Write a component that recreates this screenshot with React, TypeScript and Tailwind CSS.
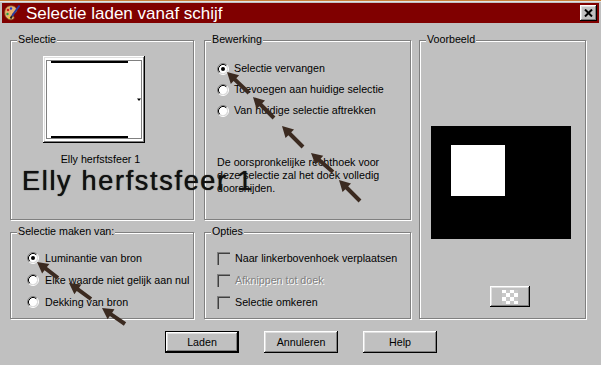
import React from 'react';
import clsx from 'clsx';

// Win95 style bevels
const raised =
  'shadow-[inset_-1px_-1px_0_#000,inset_1px_1px_0_#fff,inset_-2px_-2px_0_#808080,inset_2px_2px_0_#dfdfdf]';

const Radio = ({ checked }: { checked?: boolean }) => (
  <svg width="12" height="12" viewBox="0 0 12 12" className="shrink-0">
    <circle cx="6" cy="6" r="4.2" fill="#fff" />
    <path d="M2.11 9.89A5.5 5.5 0 0 1 9.89 2.11" stroke="#808080" fill="none" />
    <path d="M9.89 2.11A5.5 5.5 0 0 1 2.11 9.89" stroke="#fff" fill="none" />
    <path d="M2.82 9.18A4.5 4.5 0 0 1 9.18 2.82" stroke="#000" fill="none" />
    <path d="M9.18 2.82A4.5 4.5 0 0 1 2.82 9.18" stroke="#dfdfdf" fill="none" />
    {checked && <circle cx="6" cy="6" r="2" fill="#000" />}
  </svg>
);

const Checkbox = () => (
  <div className="h-[13px] w-[13px] shrink-0 border-t border-l border-[#808080] border-r-white border-b-white">
    <div className="h-full w-full border-t border-l border-[#404040] border-r-[#dfdfdf] border-b-[#dfdfdf] bg-[#c0c0c0]" />
  </div>
);

interface GroupBoxProps {
  title: string;
  className?: string;
  children?: React.ReactNode;
}

const GroupBox = ({ title, className, children }: GroupBoxProps) => (
  <div
    className={clsx(
      'relative border border-[#808080] shadow-[1px_1px_0_#fff,inset_1px_1px_0_#fff]',
      className
    )}
  >
    <span className="absolute left-[6px] top-[-8px] whitespace-nowrap bg-[#c0c0c0] px-[1px] leading-[13px]">
      {title}
    </span>
    {children}
  </div>
);

const Button = ({ label, isDefault }: { label: string; isDefault?: boolean }) => (
  <div className={clsx('h-[22px] w-[74px]', isDefault && 'border border-black')}>
    <div className={clsx('flex h-full w-full items-center justify-center', raised)}>
      {label}
    </div>
  </div>
);

// pijlen: punt (tx,ty) en staart (sx,sy)
const arrows: [number, number, number, number][] = [
  [227, 72, 249, 93],
  [253, 97, 274, 118],
  [282, 126, 303, 147],
  [311, 153, 333, 172],
  [339, 180, 360, 201],
  [37, 262, 58, 278],
  [69, 283, 91, 299],
  [102, 308, 125, 324],
];

function arrowPoints(tx: number, ty: number, sx: number, sy: number) {
  const len = Math.hypot(tx - sx, ty - sy);
  const dx = (tx - sx) / len;
  const dy = (ty - sy) / len;
  const nx = -dy;
  const ny = dx;
  const h = 11;
  const w = 6;
  const s = 2;
  const bx = tx - dx * h;
  const by = ty - dy * h;
  const pts = [
    [tx, ty],
    [bx + nx * w, by + ny * w],
    [bx + nx * s, by + ny * s],
    [sx + nx * s, sy + ny * s],
    [sx - nx * s, sy - ny * s],
    [bx - nx * s, by - ny * s],
    [bx - nx * w, by - ny * w],
  ];
  return pts.map((p) => p.join(',')).join(' ');
}

const PaletteIcon = () => (
  <svg width="18" height="18" viewBox="0 0 18 18">
    <path d="M3 4C5 1 11 1 13 4C15 7 13 9 11 9C9 9 10 12 11 13C12 15 8 17 5 15C1 13 1 7 3 4Z" fill="#e8b070" stroke="#7a4a20" strokeWidth="0.8" />
    <circle cx="5" cy="6" r="1.3" fill="#d02020" />
    <circle cx="8" cy="4.5" r="1.2" fill="#2040d0" />
    <circle cx="4.5" cy="10" r="1.2" fill="#20a040" />
    <circle cx="6.5" cy="13.5" r="1.1" fill="#f0e020" />
    <path d="M16.5 1.5L9 12" stroke="#2a3aa0" strokeWidth="2" />
    <path d="M9 12L7.5 14.5" stroke="#222" strokeWidth="2" />
  </svg>
);

const Checker = () => (
  <svg width="16" height="14" viewBox="0 0 16 14">
    {[0, 1, 2, 3].map((r) =>
      [0, 1, 2, 3].map((c) => (
        <rect
          key={`${r}-${c}`}
          x={c * 4}
          y={r * 4 - 1}
          width="4"
          height="4"
          fill={(r + c) % 2 === 0 ? '#ffffff' : '#c8c8c8'}
        />
      ))
    )}
  </svg>
);

export default function App() {
  return (
    <div className="relative h-[365px] w-[601px] overflow-hidden whitespace-nowrap bg-[#c0c0c0] font-['Liberation_Sans',Arial,sans-serif] text-[10.7px] leading-[13px] text-black">
      {/* bovenrand */}
      <div className="h-[1px] bg-[#c8803c]" />
      <div className="h-[1px] bg-[#e4e4e4]" />
      <div className="h-[1px] bg-[#c0c0c0]" />

      {/* titelbalk */}
      <div className="mx-[2px] flex h-[20px] items-center bg-[#800000] pl-[1px] pr-[2px]">
        <PaletteIcon />
        <span className="ml-[5px] pt-[1px] text-[17px] leading-[20px] text-white">
          Selectie laden vanaf schijf
        </span>
        <div className={clsx('ml-auto flex h-[16px] w-[17px] items-center justify-center bg-[#c0c0c0]', raised)}>
          <svg width="9" height="8" viewBox="0 0 9 8">
            <path d="M1 0.5L8 7.5M8 0.5L1 7.5" stroke="#000" strokeWidth="2" />
          </svg>
        </div>
      </div>

      {/* panelen */}
      <div className="flex pl-[10px] pt-[17px]">
        <div className="flex w-[184px] flex-col gap-[12px]">
          <GroupBox title="Selectie" className="h-[180px]">
            <div className={clsx('ml-[32px] mt-[15px] h-[87px] w-[102px] p-[2px]', raised)}>
              <svg width="98" height="83" viewBox="0 0 98 83" className="block">
                <rect width="98" height="83" fill="#fff" />
                <rect x="1.5" y="2.5" width="95" height="78" fill="none" stroke="#000" strokeWidth="1" strokeDasharray="1 1" />
                <rect x="6" y="3" width="77" height="2" fill="#000" />
                <rect x="6" y="78" width="77" height="2" fill="#000" />
                <path d="M92 40.5h4l-2 2.5z" fill="#000" />
              </svg>
            </div>
            <div className="mt-[10px] pr-[3px] text-center">Elly herfstsfeer 1</div>
          </GroupBox>

          <GroupBox title="Selectie maken van:" className="h-[87px]">
            <div className="flex flex-col pl-[16px] pt-[14px]">
              <div className="flex h-[22px] items-center gap-[6px]">
                <Radio checked />
                <span>Luminantie van bron</span>
              </div>
              <div className="flex h-[22px] items-center gap-[6px]">
                <Radio />
                <span>Elke waarde niet gelijk aan nul</span>
              </div>
              <div className="flex h-[22px] items-center gap-[6px]">
                <Radio />
                <span>Dekking van bron</span>
              </div>
            </div>
          </GroupBox>
        </div>

        <div className="ml-[10px] flex w-[207px] flex-col gap-[12px]">
          <GroupBox title="Bewerking" className="h-[180px]">
            <div className="flex flex-col pl-[12px] pt-[17px]">
              <div className="flex h-[21px] items-center gap-[5px]">
                <Radio checked />
                <span>Selectie vervangen</span>
              </div>
              <div className="flex h-[21px] items-center gap-[5px]">
                <Radio />
                <span>Toevoegen aan huidige selectie</span>
              </div>
              <div className="flex h-[21px] items-center gap-[5px]">
                <Radio />
                <span>Van huidige selectie aftrekken</span>
              </div>
              <p className="mt-[35px]">
                De oorspronkelijke rechthoek voor
                <br />
                deze selectie zal het doek volledig
                <br />
                doorsnijden.
              </p>
            </div>
          </GroupBox>

          <GroupBox title="Opties" className="h-[87px]">
            <div className="flex flex-col pl-[12px] pt-[14px]">
              <div className="flex h-[22px] items-center gap-[5px]">
                <Checkbox />
                <span>Naar linkerbovenhoek verplaatsen</span>
              </div>
              <div className="flex h-[22px] items-center gap-[5px]">
                <Checkbox />
                <span className="text-[#808080] [text-shadow:1px_1px_0_#fff]">Afknippen tot doek</span>
              </div>
              <div className="flex h-[22px] items-center gap-[5px]">
                <Checkbox />
                <span>Selectie omkeren</span>
              </div>
            </div>
          </GroupBox>
        </div>

        <GroupBox title="Voorbeeld" className="ml-[8px] h-[279px] w-[167px]">
          <div className="ml-[11px] mt-[85px] h-[113px] w-[140px] bg-black pl-[20px] pt-[19px]">
            <div className="h-[51px] w-[54px] bg-white" />
          </div>
          <div className={clsx('ml-[70px] mt-[47px] flex h-[21px] w-[40px] items-center justify-center', raised)}>
            <Checker />
          </div>
        </GroupBox>
      </div>

      {/* knoppen */}
      <div className="mt-[12px] flex gap-[25px] pl-[165px]">
        <Button label="Laden" isDefault />
        <Button label="Annuleren" />
        <Button label="Help" />
      </div>

      {/* overlay: grote tekst en pijlen */}
      <span className="absolute left-[22px] top-[168px] text-[27px] leading-[27px] tracking-[1.7px] text-[#111] [text-shadow:0_0_1px_#000]">
        Elly herfstsfeer 1
      </span>
      <svg className="pointer-events-none absolute inset-0" width="601" height="365">
        {arrows.map(([tx, ty, sx, sy], i) => (
          <polygon key={i} points={arrowPoints(tx, ty, sx, sy)} fill="#3b2a20" />
        ))}
      </svg>
    </div>
  );
}
